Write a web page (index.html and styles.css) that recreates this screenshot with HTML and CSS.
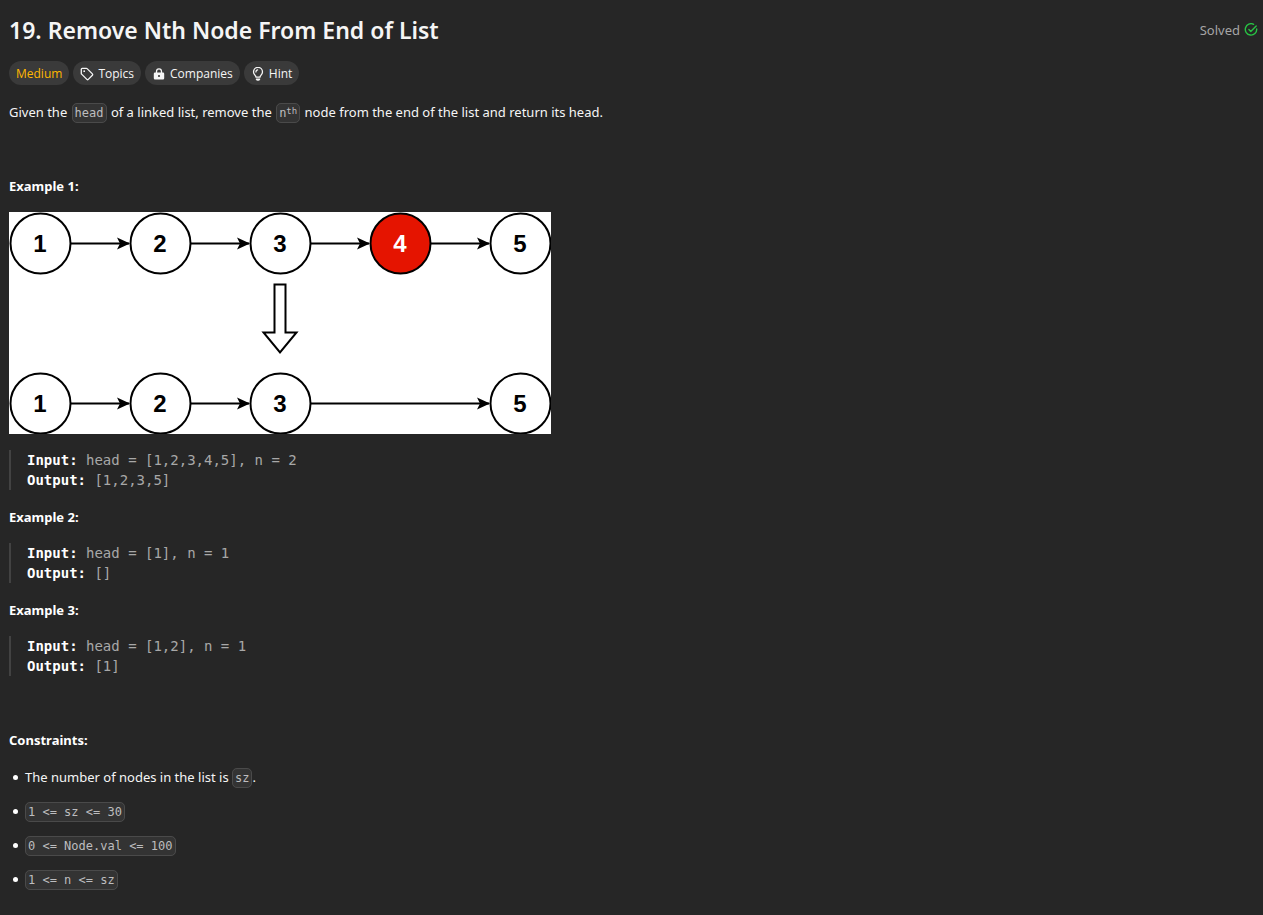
FILE: index.html
```html
<!DOCTYPE html>
<html lang="en">
<head>
<meta charset="utf-8">
<title>19. Remove Nth Node From End of List</title>
<link rel="stylesheet" href="styles.css">
</head>
<body>
<main class="problem">
  <header class="header">
    <h1 class="title">19. Remove Nth Node From End of List</h1>
    <div class="status">Solved
      <svg class="check" width="14" height="14" viewBox="0 0 14 14" fill="none" stroke="currentColor" stroke-width="1.4" stroke-linecap="round" stroke-linejoin="round" aria-hidden="true">
        <path d="M9.6 1.3A5.7 5.7 0 1 0 12.7 6"/><path d="M4.900 6.500l1.900 1.900 5.400-5.500"/>
      </svg>
    </div>
  </header>

  <div class="tags">
    <span class="tag medium">Medium</span>
    <button class="tag" type="button">
      <svg width="14" height="14" viewBox="0 0 14 14" fill="none" stroke="currentColor" stroke-width="1.3" stroke-linejoin="round" aria-hidden="true">
        <path d="M1.3 2.2a.9.9 0 0 1 .9-.9h4.2a1 1 0 0 1 .7.3l5.3 5.3a1 1 0 0 1 0 1.4l-4.1 4.1a1 1 0 0 1-1.4 0L1.6 7.1a1 1 0 0 1-.3-.7z"/><circle cx="4.2" cy="4.2" r=".9" fill="currentColor" stroke="none"/>
      </svg>Topics</button>
    <button class="tag" type="button">
      <svg width="14" height="14" viewBox="0 0 14 14" aria-hidden="true">
        <path d="M4.500 6V4.500a2.500 2.700 0 0 1 5 0V6" fill="none" stroke="currentColor" stroke-width="1.3"/>
        <path fill="currentColor" fill-rule="evenodd" d="M3 5.6h8a1.2 1.2 0 0 1 1.2 1.2v4.4a1.2 1.2 0 0 1-1.2 1.2H3a1.2 1.2 0 0 1-1.2-1.2V6.8a1.2 1.2 0 0 1 1.2-1.2zM7 7.900a1.100 1.100 0 1 0 0 2.200a1.100 1.100 0 0 0 0-2.200z"/>
      </svg>Companies</button>
    <button class="tag" type="button">
      <svg width="14" height="14" viewBox="0 0 14 14" fill="none" stroke="currentColor" stroke-width="1.3" stroke-linecap="round" stroke-linejoin="round" aria-hidden="true">
        <path d="M5 10.200C5 8.400 2.500 7.600 2.500 4.900a4.500 4.500 0 0 1 9 0c0 2.700-2.500 3.500-2.500 5.300z"/><path d="M5.400 12.200a1.700 1.400 0 0 0 3.200 0z" fill="currentColor"/><path d="M4.900 4.900A2.100 2.100 0 0 1 6.600 2.900"/>
      </svg>Hint</button>
  </div>

  <article class="content">
    <p>Given the <code>head</code> of a linked list, remove the <code>n<sup>th</sup></code> node from the end of the list and return its head.</p>
    <p>&nbsp;</p>
    <p class="example"><strong>Example 1:</strong></p>
    <svg class="diagram" width="542" height="222" viewBox="0 0 542 222" role="img" aria-label="Linked list before and after removing node 4">
      <defs>
        <marker id="tip" markerUnits="userSpaceOnUse" markerWidth="14" markerHeight="14" refX="12" refY="7" orient="auto"><path d="M0 1L13 7L0 13L3 7z"/></marker>
      </defs>
      <rect width="542" height="222" fill="#fff"/>
      <g fill="none" stroke="#000" stroke-width="2">
        <path d="M61 31.500H120" marker-end="url(#tip)"/>
        <path d="M181 31.500H240" marker-end="url(#tip)"/>
        <path d="M301 31.500H360" marker-end="url(#tip)"/>
        <path d="M421 31.500H480" marker-end="url(#tip)"/>
        <path d="M61 191.500H120" marker-end="url(#tip)"/>
        <path d="M181 191.500H240" marker-end="url(#tip)"/>
        <path d="M301 191.500H480" marker-end="url(#tip)"/>
        <circle cx="31.500" cy="31.500" r="30"/><circle cx="151.500" cy="31.500" r="30"/><circle cx="271.500" cy="31.500" r="30"/>
        <circle cx="391.500" cy="31.500" r="30" fill="#e51400"/><circle cx="511.500" cy="31.500" r="30"/>
        <circle cx="31.500" cy="191.500" r="30"/><circle cx="151.500" cy="191.500" r="30"/><circle cx="271.500" cy="191.500" r="30"/><circle cx="511.500" cy="191.500" r="30"/>
        <path d="M265.500 72.500h11v48h11L271 140.500L254.500 120.500h11z"/>
      </g>
      <g class="labels">
        <text x="31" y="40">1</text><text x="151" y="40">2</text><text x="271" y="40">3</text><text x="391" y="40" fill="#fff">4</text><text x="511" y="40">5</text>
        <text x="31" y="200">1</text><text x="151" y="200">2</text><text x="271" y="200">3</text><text x="511" y="200">5</text>
      </g>
    </svg>
    <pre><strong>Input:</strong> head = [1,2,3,4,5], n = 2
<strong>Output:</strong> [1,2,3,5]</pre>
    <p class="example"><strong>Example 2:</strong></p>
    <pre><strong>Input:</strong> head = [1], n = 1
<strong>Output:</strong> []</pre>
    <p class="example"><strong>Example 3:</strong></p>
    <pre><strong>Input:</strong> head = [1,2], n = 1
<strong>Output:</strong> [1]</pre>
    <p>&nbsp;</p>
    <p><strong>Constraints:</strong></p>
    <ul>
      <li>The number of nodes in the list is <code>sz</code>.</li>
      <li><code>1 &lt;= sz &lt;= 30</code></li>
      <li><code>0 &lt;= Node.val &lt;= 100</code></li>
      <li><code>1 &lt;= n &lt;= sz</code></li>
    </ul>
  </article>
</main>
</body>
</html>
```
FILE: styles.css
```css
* { box-sizing: border-box; }

body {
  margin: 0;
  background: #262626;
  color: #f5f5f5;
  font: 13px/20px "Noto Sans", "Open Sans", sans-serif;
}

.problem { padding: 14px 5px 16px 9px; }

.header {
  display: flex;
  align-items: center;
  justify-content: space-between;
}

.title {
  margin: 0;
  font-size: 23px;
  line-height: 32px;
  font-weight: 600;
}

.status {
  display: flex;
  align-items: center;
  gap: 4px;
  color: #a5a5a5;
}

.check { color: #28c244; }

.tags {
  display: flex;
  gap: 4px;
  margin-top: 15px;
}

.tag {
  display: flex;
  align-items: center;
  gap: 4px;
  height: 24px;
  padding: 1px 7px 0;
  border: 0;
  border-radius: 12px;
  background: #3a3a3a;
  color: #f5f5f5;
  font: 12px/16px "Open Sans", "Noto Sans", sans-serif;
}

.medium { color: #ffb700; }

.content { padding-top: 17px; }

p { margin: 0 0 17px; }

.example { margin-bottom: 16px; }

strong { color: #fff; }

code {
  padding: 2px;
  border: 1px solid #4a4a4a;
  border-radius: 5px;
  background: #333;
  color: #bdbdbf;
  font: 12px/16px "DejaVu Sans Mono", monospace;
}

p code { margin: 0 1px; }

sup {
  font-size: 9px;
  line-height: 0;
  vertical-align: 3px;
}

.diagram { display: block; margin-bottom: 16px; }

.labels {
  font: bold 24px "Liberation Sans", sans-serif;
  text-anchor: middle;
}

pre {
  margin: 0 0 17px;
  padding-left: 16px;
  border-left: 2px solid #424242;
  color: #a8a8a8;
  font: 14px/20px "DejaVu Sans Mono", monospace;
}

ul {
  margin: 0;
  padding-left: 4px;
  list-style: none;
}

li { margin-bottom: 14px; }

li::before {
  content: "";
  display: inline-block;
  width: 5px;
  height: 5px;
  margin-right: 7px;
  border-radius: 50%;
  background: #fff;
  vertical-align: 2px;
}
```
